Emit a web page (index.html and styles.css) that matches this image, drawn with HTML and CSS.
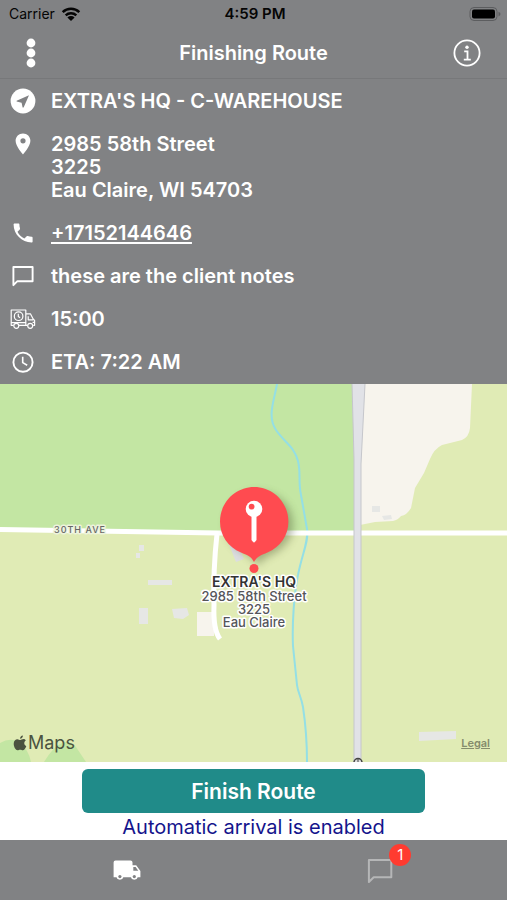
FILE: index.html
```html
<!DOCTYPE html>
<html lang="en">
<head>
<meta charset="utf-8">
<meta name="viewport" content="width=device-width, initial-scale=1">
<title>Finishing Route</title>
<link rel="stylesheet" href="styles.css">
</head>
<body>
<div class="app">
  <div class="status">
    <div class="status-carrier">
      <span>Carrier</span>
      <svg width="20" height="16" viewBox="0 0 20 16" aria-hidden="true">
        <g fill="none" stroke="#050505" stroke-width="2.5">
          <path d="M1.7 6.1a12 12 0 0 1 16.6 0"/>
          <path d="M4.7 9.3a7.7 7.7 0 0 1 10.6 0"/>
        </g>
        <path d="M6.4 11.4a5.2 5.2 0 0 1 7.2 0L10 15z" fill="#050505"/>
      </svg>
    </div>
    <div class="status-time">4:59 PM</div>
    <svg class="battery" width="32" height="14" viewBox="0 0 32 14" aria-hidden="true">
      <rect x="1" y="0.5" width="27" height="13" rx="4" fill="none" stroke="#5c5d5f"/>
      <rect x="3" y="2.5" width="23" height="9" rx="2" fill="#000"/>
      <path d="M29.5 4.8v4.6q2-.8 2-2.3t-2-2.3z" fill="#5c5d5f"/>
    </svg>
  </div>

  <header class="nav">
    <button class="nav-button" type="button" aria-label="Menu">
      <svg width="30" height="30" viewBox="0 0 30 30" fill="#fff"><circle cx="15" cy="5" r="4.4"/><circle cx="15" cy="15" r="4.4"/><circle cx="15" cy="25" r="4.4"/></svg>
    </button>
    <h1 class="nav-title">Finishing Route</h1>
    <button class="nav-button nav-info" type="button" aria-label="Information">
      <svg width="28" height="28" viewBox="0 0 28 28">
        <circle cx="14" cy="14" r="12.6" fill="none" stroke="#fff" stroke-width="1.8"/>
        <circle cx="14" cy="8.2" r="1.7" fill="#fff"/>
        <path d="M11.2 12.4h3.3v8M10.8 20.6h7" fill="none" stroke="#fff" stroke-width="1.8"/>
      </svg>
    </button>
  </header>

  <section class="details">
    <div class="row">
      <svg class="icon" viewBox="0 0 26 26"><circle cx="13" cy="13" r="12.400" fill="#fff"/><path d="M19 7.200 6.600 12.700v.9l5 1.200 1 4.600h1z" fill="#818284"/></svg>
      <p>EXTRA'S HQ - C-WAREHOUSE</p>
    </div>
    <div class="row">
      <svg class="icon" viewBox="0 0 26 26"><path d="M13 2.500c-4.200 0-7.400 3.200-7.400 7.300C5.600 15.300 13 23.500 13 23.500s7.400-8.200 7.400-13.700c0-4.100-3.200-7.300-7.400-7.300zm0 9.900a2.600 2.600 0 1 1 0-5.200 2.600 2.600 0 0 1 0 5.200z" fill="#fff"/></svg>
      <p>2985 58th Street<br>3225<br>Eau Claire, WI 54703</p>
    </div>
    <div class="row">
      <svg class="icon" viewBox="0 0 26 26"><path d="M7.500 11.700c1.500 3 3.900 5.400 6.900 6.900l2.300-2.300c.3-.3.700-.4 1.100-.2 1.200.4 2.500.6 3.800.6.6 0 1 .4 1 1v3.700c0 .6-.4 1-1 1C11.700 22.400 3.600 14.300 3.600 4.500c0-.6.5-1 1.100-1h3.700c.6 0 1 .4 1 1 0 1.300.2 2.600.6 3.800.1.400 0 .8-.2 1.100z" fill="#fff"/></svg>
      <p><a class="phone" href="tel:+17152144646">+17152144646</a></p>
    </div>
    <div class="row">
      <svg class="icon" viewBox="0 0 26 26"><path d="M3.400 22.200V4h19.200v14.200H7.400z" fill="none" stroke="#fff" stroke-width="1.900" stroke-linejoin="round"/></svg>
      <p>these are the client notes</p>
    </div>
    <div class="row">
      <svg class="icon" viewBox="0 0 26 26" fill="none" stroke="#fff" stroke-width="1.200" stroke-linejoin="round">
        <path d="M3.500 19.300H1.200V4h14.600v15.300H9M15.800 7.800h4.600l2.900 5.400 1.300 1.300v4.800h-1.400M15.800 19.300h1.600M18.200 10.200v3.600h5M1.200 16.600h14.600M22.600 16.400h2"/>
        <circle cx="6.300" cy="19.800" r="2.500"/><circle cx="20.200" cy="19.800" r="2.500"/>
        <circle cx="8.600" cy="10.200" r="4.300"/><path d="M8.300 7.700v2.800l1.800 1.200"/>
      </svg>
      <p>15:00</p>
    </div>
    <div class="row">
      <svg class="icon" viewBox="0 0 26 26" fill="none" stroke="#fff" stroke-width="1.900"><circle cx="13" cy="13.200" r="9.600"/><path d="M12.700 7.800v5.800l4.500 2.700" stroke-width="1.600"/></svg>
      <p>ETA: 7:22 AM</p>
    </div>
  </section>

  <main class="map">
    <svg class="map-canvas" viewBox="0 0 507 378" preserveAspectRatio="xMidYMid slice" role="img" aria-label="Route map">
      <defs>
        <filter id="soft" x="-40%" y="-40%" width="180%" height="180%"><feGaussianBlur stdDeviation="4"/></filter>
      </defs>
      <rect width="507" height="378" fill="#e0ebb5"/>
      <path d="M0 0h356v149L0 145z" fill="#c3e6a3"/>
      <path d="M362 0h110l-2 44q-1 9-8 12l-20 5q-8 4-12 14l-6 14-9 15-4 20q-4 7-10 8-3 4-8 5l-18 1-15 3z" fill="#f7f4ed"/>
      <path d="M0 359q10-6 19-1 10 8 12 20H0zM44 378q9-15 18-19 8-3 14 4l10 15z" fill="#c3e6a3"/>
      <path d="M148 196h24v5h-24zM139 224h9v16h-9zM172 225l15-1 2 7-6 4-9-1zM419 348l37-1v8l-37 2zM139 161h5v6h-5zM136 169h4v5h-4zM372 122h8v6h-8zM382 132l9-1 1 4-8 1z" fill="#e6e7e5"/>
      <path d="M197 228h17v24h-17z" fill="#f7f4ed"/>
      <path d="m228 158 10 2 6 15-8 3z" fill="#dcdde0"/>
      <path d="M277 0c-3 17-10 33-1 46 8 12 18 16 22 31 3 12 0 20 3 34l6 34c2 12-5 25-9 46-4 18-6 50-5 71l4 39c1 8 4 11 6 22 3 20 4 35 4 55" fill="none" stroke="#94dfe5" stroke-width="2"/>
      <path d="M217 150q-4 36-3 71-1 25 6 34" fill="none" stroke="#fff" stroke-width="5"/>
      <path d="M0 145.500 218 149h289" fill="none" stroke="#fff" stroke-width="5"/>
      <path d="M352 0h13l-4 80v298h-7V75z" fill="#e1e2e7"/>
      <path d="M352 0l2 75v303M365 0l-4 80v298" fill="none" stroke="#c5c6cb"/>
      <circle cx="358" cy="378.500" r="4" fill="#ddd" stroke="#444" stroke-width="1.500"/><path d="M358 375v3" stroke="#444"/>
      <text class="road-label" x="80" y="149">30TH AVE</text>
      <path d="M258 182c4-7 9-9 15-12 12-6 20-16 20-29 0-19-15-33-34-33s-33 14-33 33c0 13 8 23 20 29 5 3 9 6 12 12z" fill="#46522c" opacity=".4" filter="url(#soft)"/>
      <path d="M254 178c-3-6-7-7-13-9.500-13-5.500-21-17-21-31 0-19 15.300-34.500 34.200-34.500s34.200 15.500 34.200 34.500c0 14-8 25.500-21 31-6 2.500-10 3.500-13.400 9.500z" fill="#ff4b50"/>
      <circle cx="254" cy="184.500" r="4.500" fill="#ff4b50"/>
      <path d="M252 128h4v28q-2 4-4 0z" fill="#fff" stroke="#fff"/>
      <circle cx="254" cy="125" r="8.300" fill="#fff"/><circle cx="251.600" cy="122.600" r="2.900" fill="#ff4b50"/>
      <text class="pin-title" x="254" y="203">EXTRA'S HQ</text>
      <g class="pin-label">
        <text x="254" y="217">2985 58th Street</text>
        <text x="254" y="230">3225</text>
        <text x="254" y="243">Eau Claire</text>
      </g>
    </svg>
    <div class="map-footer">
      <span class="map-brand">
        <svg width="14" height="16" viewBox="0 0 14 16" fill="#4b5340" aria-hidden="true"><path d="M12.800 5.600C10.600 7 10.900 10 13.300 11.200 12.500 13.400 11.200 15.300 9.800 15.300c-1 0-1.400-.6-2.600-.6s-1.600.6-2.600.6C2.800 15.300.7 11.900.7 8.800c0-3 1.800-4.600 3.700-4.600 1.200 0 2.100.8 2.900.8.700 0 1.800-.9 3.200-.9.800 0 1.700.4 2.300 1.500zM9.900.4C10 2.200 8.700 3.700 7.100 3.700 7 2 8.300.6 9.900.4z"/></svg>
        <span>Maps</span>
      </span>
      <a class="map-legal" href="#legal">Legal</a>
    </div>
  </main>

  <section class="action">
    <button class="finish" type="button">Finish Route</button>
    <p class="notice">Automatic arrival is enabled</p>
  </section>

  <nav class="tabs" aria-label="Sections">
    <a class="tab" href="#route" aria-label="Route">
      <svg width="28" height="28" viewBox="0 0 28 28"><path d="M2.500 4.500h15q2 0 2 2v2.700h3.700l4.200 5.700v6.300h-2.700a3.500 3.500 0 0 1-6.800 0h-7.600a3.500 3.500 0 0 1-6.800 0H.6V6.500q0-2 1.900-2z" fill="#fff"/><path d="M20.300 11h2.300l2.700 3.700h-5z" fill="#818284"/><circle cx="6.900" cy="20.600" r="1.600" fill="#818284"/><circle cx="21.300" cy="20.600" r="1.600" fill="#818284"/></svg>
    </a>
    <a class="tab" href="#messages" aria-label="Messages">
      <svg width="28" height="28" viewBox="0 0 28 28"><path d="M2.900 26V4h22.400v17.200H7.700z" fill="none" stroke="#b5b6b7" stroke-width="2" stroke-linejoin="round"/></svg>
      <span class="badge">1</span>
    </a>
  </nav>
</div>
</body>
</html>
```

FILE: styles.css
```css
* {
  box-sizing: border-box;
}

body {
  margin: 0;
  font-family: Inter, "Liberation Sans", sans-serif;
  color: #fff;
  background: #818284;
}

h1,
p {
  margin: 0;
}

svg {
  display: block;
}

button {
  font: inherit;
  color: inherit;
  border: 0;
  padding: 0;
}

.app {
  display: flex;
  flex-direction: column;
  min-height: 100vh;
}

.status {
  display: grid;
  grid-template-columns: 1fr auto 1fr;
  align-items: center;
  height: 27px;
  padding: 0 6px 0 9px;
  font-size: 14px;
  color: #050505;
}

.status-carrier {
  display: flex;
  align-items: center;
  gap: 6px;
}

.status-time {
  font-size: 15px;
  font-weight: 600;
}

.battery {
  justify-self: end;
}

.nav {
  display: grid;
  grid-template-columns: 1fr auto 1fr;
  align-items: center;
  height: 52px;
  padding: 0 6px;
  border-bottom: 1px solid #77787a;
}

.nav-button {
  display: grid;
  place-items: center;
  width: 50px;
  height: 50px;
  background: none;
}

.nav-info {
  justify-self: end;
  width: 68px;
}

.nav-title {
  font-size: 20px;
  font-weight: 600;
}

.details {
  display: flex;
  flex-direction: column;
  gap: 20px;
  padding: 11px 10px 10px;
  font-size: 20px;
  font-weight: 600;
  line-height: 23px;
}

.row {
  display: flex;
  gap: 15px;
}

.icon {
  flex: none;
  width: 26px;
  height: 26px;
  margin: -2px 0 -1px;
}

.phone {
  color: inherit;
  text-decoration-thickness: 2px;
  text-underline-offset: 2px;
}

.map {
  position: relative;
  flex: 1;
  min-height: 240px;
  overflow: hidden;
}

.map-canvas {
  position: absolute;
  width: 100%;
  height: 100%;
}

.map-canvas text {
  text-anchor: middle;
  paint-order: stroke;
  stroke: #fff;
  stroke-width: 3px;
  stroke-linejoin: round;
}

.map-canvas .road-label {
  font-size: 9px;
  font-weight: 500;
  letter-spacing: 1px;
  fill: #666;
  stroke: #edf3dc;
}

.pin-title {
  font-size: 14px;
  font-weight: 600;
  fill: #333;
}

.pin-label {
  font-size: 13px;
  font-weight: 500;
  fill: #55555a;
}

.map-footer {
  position: absolute;
  right: 17px;
  bottom: 9px;
  left: 13px;
  display: flex;
  align-items: center;
  justify-content: space-between;
}

.map-brand {
  display: flex;
  align-items: center;
  gap: 1px;
  font-size: 18px;
  color: #4b5340;
}

.map-legal {
  font-size: 11px;
  font-weight: 600;
  color: #858c6c;
}

.action {
  display: flex;
  flex-direction: column;
  gap: 2px;
  padding: 7px 82px 0;
  background: #fff;
}

.finish {
  height: 44px;
  font-size: 21px;
  font-weight: 600;
  background: #208b89;
  border-radius: 6px;
}

.notice {
  font-size: 20px;
  line-height: 25px;
  text-align: center;
  color: #14148c;
}

.tabs {
  display: flex;
  height: 60px;
}

.tab {
  position: relative;
  display: grid;
  flex: 1;
  place-items: center;
  color: #fff;
  text-decoration: none;
}

.badge {
  position: absolute;
  top: 4px;
  left: calc(50% + 9px);
  width: 22px;
  height: 22px;
  font-size: 15px;
  line-height: 22px;
  text-align: center;
  background: #ff3b30;
  border-radius: 50%;
}
```
